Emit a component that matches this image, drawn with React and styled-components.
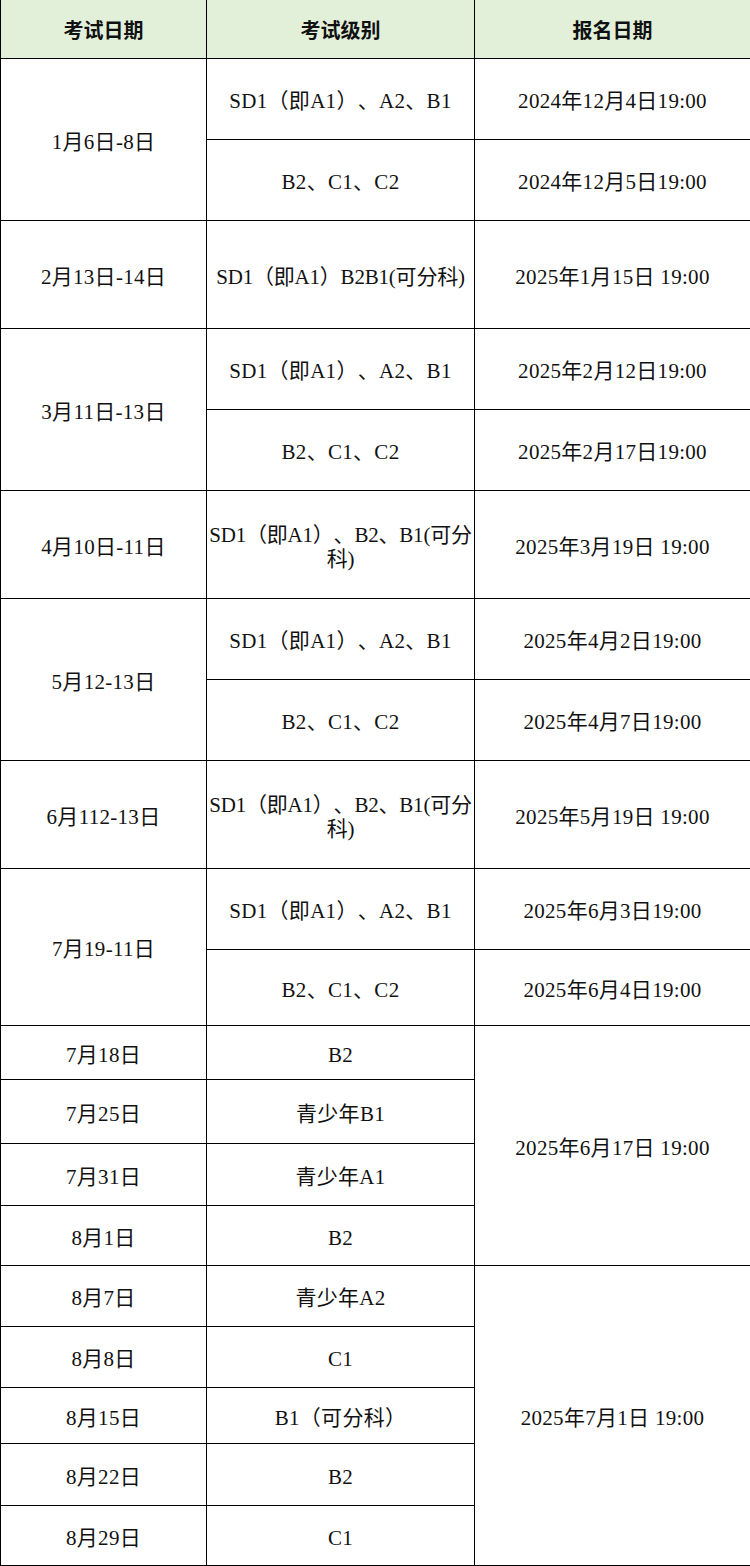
import React from "react";
import styled, { createGlobalStyle } from "styled-components";

const rows = [
  { h: 81, cells: [{ t: "1月6日-8日", rs: 2 }, { t: "SD1（即A1）、A2、B1" }, { t: "2024年12月4日19:00" }] },
  { h: 81, cells: [{ t: "B2、C1、C2" }, { t: "2024年12月5日19:00" }] },
  { h: 108, cells: [{ t: "2月13日-14日" }, { t: "SD1（即A1）B2B1(可分科)", tight: true }, { t: "2025年1月15日 19:00" }] },
  { h: 81, cells: [{ t: "3月11日-13日", rs: 2 }, { t: "SD1（即A1）、A2、B1" }, { t: "2025年2月12日19:00" }] },
  { h: 81, cells: [{ t: "B2、C1、C2" }, { t: "2025年2月17日19:00" }] },
  { h: 108, cells: [{ t: "4月10日-11日" }, { t: ["SD1（即A1）、B2、B1(可分", "科)"], tight: true }, { t: "2025年3月19日 19:00" }] },
  { h: 81, cells: [{ t: "5月12-13日", rs: 2 }, { t: "SD1（即A1）、A2、B1" }, { t: "2025年4月2日19:00" }] },
  { h: 81, cells: [{ t: "B2、C1、C2" }, { t: "2025年4月7日19:00" }] },
  { h: 108, cells: [{ t: "6月112-13日" }, { t: ["SD1（即A1）、B2、B1(可分", "科)"], tight: true }, { t: "2025年5月19日 19:00" }] },
  { h: 81, cells: [{ t: "7月19-11日", rs: 2 }, { t: "SD1（即A1）、A2、B1" }, { t: "2025年6月3日19:00" }] },
  { h: 76, cells: [{ t: "B2、C1、C2" }, { t: "2025年6月4日19:00" }] },
  { h: 54, cells: [{ t: "7月18日" }, { t: "B2" }, { t: "2025年6月17日 19:00", rs: 4 }] },
  { h: 64, cells: [{ t: "7月25日" }, { t: "青少年B1" }] },
  { h: 62, cells: [{ t: "7月31日" }, { t: "青少年A1" }] },
  { h: 60, cells: [{ t: "8月1日" }, { t: "B2" }] },
  { h: 61, cells: [{ t: "8月7日" }, { t: "青少年A2" }, { t: "2025年7月1日 19:00", rs: 5 }] },
  { h: 61, cells: [{ t: "8月8日" }, { t: "C1" }] },
  { h: 56, cells: [{ t: "8月15日" }, { t: "B1（可分科）" }] },
  { h: 62, cells: [{ t: "8月22日" }, { t: "B2" }] },
  { h: 60, cells: [{ t: "8月29日" }, { t: "C1" }] },
];

export default function App() {
  return (
    <>
      <GlobalStyle />
      <Table>
        <colgroup>
          <col style={{ width: 206 }} />
          <col style={{ width: 268 }} />
          <col style={{ width: 276 }} />
        </colgroup>
        <thead>
          <Row $h={58}>
            <HeadCell>考试日期</HeadCell>
            <HeadCell>考试级别</HeadCell>
            <HeadCell>报名日期</HeadCell>
          </Row>
        </thead>
        <tbody>
          {rows.map((row, i) => (
            <Row key={i} $h={row.h}>
              {row.cells.map((c, j) => (
                <Cell key={j} rowSpan={c.rs || 1} $tight={c.tight}>
                  {Array.isArray(c.t)
                    ? c.t.map((line, k) => (
                        <React.Fragment key={k}>
                          {k > 0 && <br />}
                          {line}
                        </React.Fragment>
                      ))
                    : c.t}
                </Cell>
              ))}
            </Row>
          ))}
        </tbody>
      </Table>
    </>
  );
}

const GlobalStyle = createGlobalStyle`
  html, body {
    margin: 0;
    padding: 0;
    background: #fff;
  }
`;

const Table = styled.table`
  width: 750px;
  border-collapse: collapse;
  table-layout: fixed;
  font-family: "Liberation Serif", "Noto Sans CJK SC", serif;
  font-size: 21px;
  color: #111;
  text-spacing-trim: space-all;
`;

const Row = styled.tr`
  height: ${(p) => p.$h}px;
`;

const HeadCell = styled.th`
  background: #e2efd9;
  border: 1px solid #000;
  border-top: none;
  font-family: "Noto Sans CJK SC", sans-serif;
  font-weight: 700;
  font-size: 20px;
  text-align: center;
  vertical-align: middle;
  padding: 2px 0 0;
`;

const Cell = styled.td`
  border: 1px solid #000;
  text-align: center;
  vertical-align: middle;
  padding: 5px 0 0;
  line-height: 24px;
  letter-spacing: ${(p) => (p.$tight ? "-0.2px" : "0.3px")};
  white-space: ${(p) => (p.$tight ? "nowrap" : "normal")};
`;
